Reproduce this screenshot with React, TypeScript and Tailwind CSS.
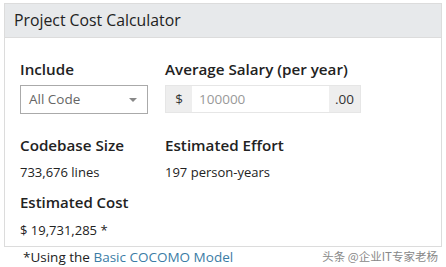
import React from 'react';

const App = () => {
    return (
        <div className="w-[446px] h-[267px] bg-white pt-[3px] px-[4px] font-['Open_Sans',sans-serif] text-[#222]">
            <div className="border border-[#dcdcdc] w-[438px] h-[244px]">
                <div className="h-[34px] bg-[#e7e9eb] border-b border-[#dcdcdc] pl-[9px] flex items-center">
                    <h1 className="text-[15.8px] text-[#222] leading-none">Project Cost Calculator</h1>
                </div>
                <div className="px-[15px] pt-[21px]">
                    <div className="flex">
                        <div className="w-[145px]">
                            <div className="text-[15.2px] font-semibold leading-[20px]">Include</div>
                            <div className="mt-[6px] w-[128px] h-[29px] border border-[#aaa] flex items-center justify-between pl-[8px] pr-[10px]">
                                <span className="text-[13.5px] text-[#666]">All Code</span>
                                <span className="w-0 h-0 border-l-[4px] border-r-[4px] border-t-[4px] border-l-transparent border-r-transparent border-t-[#888]"></span>
                            </div>
                        </div>
                        <div>
                            <div className="text-[15.2px] font-semibold leading-[20px]">Average Salary (per year)</div>
                            <div className="mt-[6px] flex h-[28px] w-[196px] border border-[#e6e6e6]">
                                <div className="w-[26px] bg-[#eeeeee] flex items-center justify-center text-[13.5px] text-[#333]">$</div>
                                <div className="flex-1 flex items-center pl-[7px] text-[13.5px] text-[#999]">100000</div>
                                <div className="w-[31px] bg-[#eeeeee] flex items-center justify-center text-[13.5px] text-[#333]">.00</div>
                            </div>
                        </div>
                    </div>
                    <div className="flex mt-[21px]">
                        <div className="w-[145px]">
                            <div className="text-[15.2px] font-semibold leading-[20px]">Codebase Size</div>
                            <div className="text-[13px] leading-[20px] mt-[7px]">733,676 lines</div>
                        </div>
                        <div>
                            <div className="text-[15.2px] font-semibold leading-[20px]">Estimated Effort</div>
                            <div className="text-[13px] leading-[20px] mt-[7px]">197 person-years</div>
                        </div>
                    </div>
                    <div className="mt-[10px]">
                        <div className="text-[15px] font-semibold leading-[20px]">Estimated Cost</div>
                        <div className="text-[13px] leading-[20px] mt-[8px]">$ 19,731,285 *</div>
                    </div>
                </div>
            </div>
            <div className="flex justify-between items-center h-[20px] pl-[19px] pr-[4px]">
                <span className="text-[13.5px] text-[#222]">*Using the <span className="text-[#3a7ca5]">Basic COCOMO Model</span></span>
                <span className="text-[11.5px] text-[#888] font-['Noto_Sans_CJK_SC',sans-serif]">头条 @企业IT专家老杨</span>
            </div>
        </div>
    );
};

export default App;
